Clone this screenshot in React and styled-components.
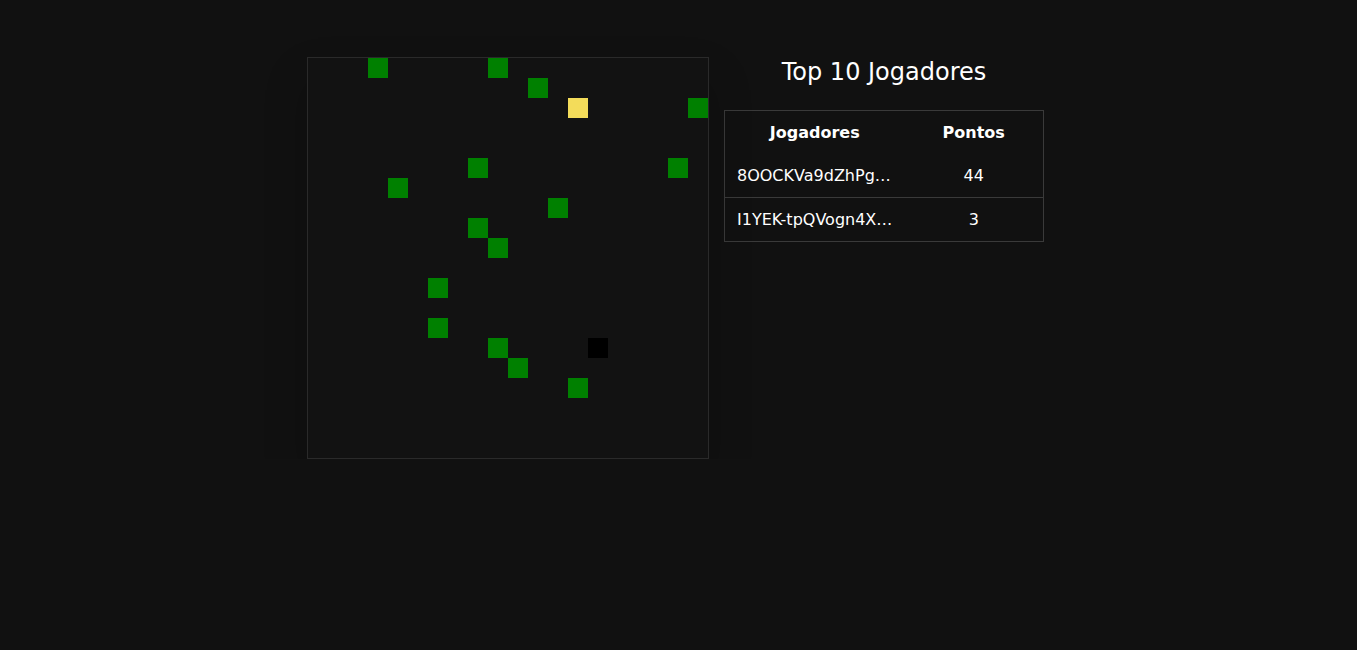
import React from 'react';
import styled, { createGlobalStyle } from 'styled-components';

const GRID = 20;
const CELL = 20;

const food = [
	[3, 0], [9, 0], [11, 1], [19, 2], [8, 5], [18, 5], [4, 6], [12, 7],
	[8, 8], [9, 9], [6, 11], [6, 13], [9, 14], [10, 15], [13, 16],
];
const player = { x: 13, y: 2 };
const enemy = { x: 14, y: 14 };

const players = [
	{ id: '8OOCKVa9dZhPgq2LxR7s', points: 44 },
	{ id: 'I1YEK-tpQVogn4XbW3aE', points: 3 },
];

const GlobalStyle = createGlobalStyle`
	html, body {
		margin: 0;
		background: #111111;
		color: #ffffff;
		font-family: "DejaVu Sans", Verdana, sans-serif;
	}
`;

function App() {
	return (
		<>
			<GlobalStyle />
			<Page>
				<Board>
					{food.map(([x, y]) => (
						<Cell key={`${x}-${y}`} $x={x} $y={y} $color="#008000" />
					))}
					<Cell $x={player.x} $y={player.y} $color="#f3dc5a" />
					<Cell $x={enemy.x} $y={enemy.y} $color="#000000" />
				</Board>
				<Ranking>
					<Title>Top 10 Jogadores</Title>
					<Table>
						<colgroup>
							<col style={{ width: '180px' }} />
							<col style={{ width: '139px' }} />
						</colgroup>
						<thead>
							<tr>
								<Th>Jogadores</Th>
								<Th>Pontos</Th>
							</tr>
						</thead>
						<tbody>
							{players.map(p => (
								<Row key={p.id}>
									<NameCell title={p.id}>{p.id}</NameCell>
									<PointsCell>{p.points}</PointsCell>
								</Row>
							))}
						</tbody>
					</Table>
				</Ranking>
			</Page>
		</>
	);
}

const Page = styled.div`
	display: flex;
	justify-content: center;
	align-items: flex-start;
	gap: 15px;
	padding: 57px 6px 0 0;
`;

const Board = styled.div`
	position: relative;
	width: ${GRID * CELL}px;
	height: ${GRID * CELL}px;
	border: 1px solid #2a2a2a;
	background: #121212;
	box-shadow: 0 22px 40px rgba(0, 0, 0, 0.22);
	flex-shrink: 0;
`;

const Cell = styled.div`
	position: absolute;
	left: ${p => p.$x * CELL}px;
	top: ${p => p.$y * CELL}px;
	width: ${CELL}px;
	height: ${CELL}px;
	background: ${p => p.$color};
`;

const Ranking = styled.div`
	width: 320px;
	display: flex;
	flex-direction: column;
	align-items: center;
`;

const Title = styled.h2`
	margin: 0 0 23px;
	font-size: 24px;
	font-weight: 400;
	line-height: 30px;
`;

const Table = styled.table`
	width: 319px;
	align-self: flex-start;
	table-layout: fixed;
	border-collapse: collapse;
	border: 1px solid #3a3a3a;
	font-size: 16px;
`;

const Th = styled.th`
	padding: 12px;
	font-weight: 700;
	text-align: center;
	line-height: 19px;
`;

const Row = styled.tr`
	& + & td {
		border-top: 1px solid #3a3a3a;
	}
`;

const NameCell = styled.td`
	padding: 12px;
	line-height: 19px;
	white-space: nowrap;
	overflow: hidden;
	text-overflow: ellipsis;
`;

const PointsCell = styled.td`
	padding: 12px;
	line-height: 19px;
	text-align: center;
`;

export default App;
